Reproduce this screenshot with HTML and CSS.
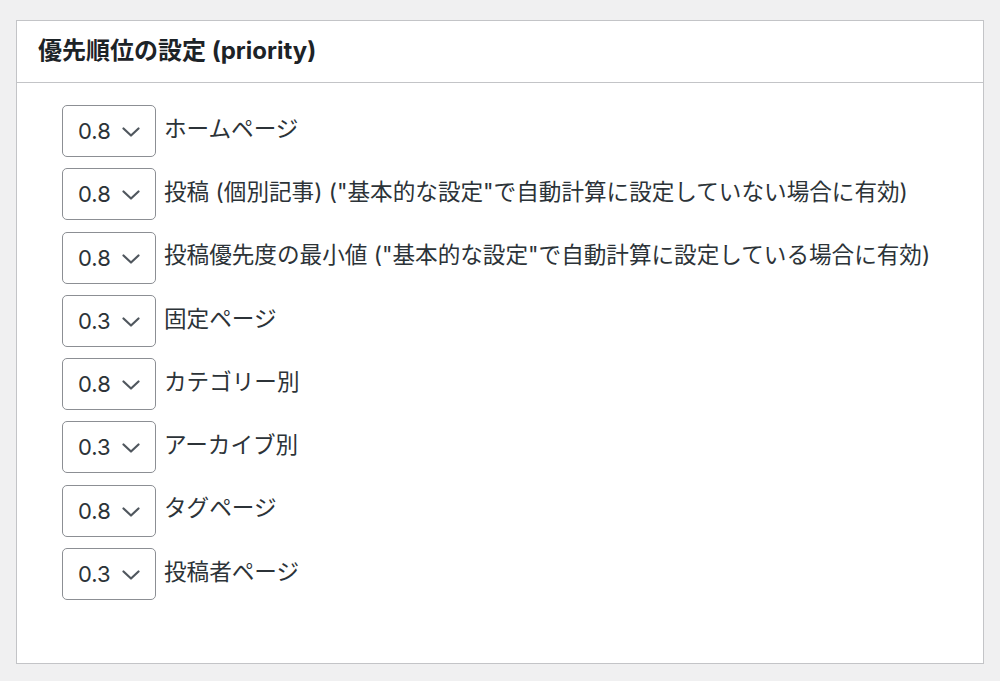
FILE: index.html
```html
<!DOCTYPE html>
<html lang="ja">
<head>
<meta charset="utf-8">
<title>優先順位の設定</title>
<link rel="stylesheet" href="styles.css">
</head>
<body>
<div class="postbox">
  <div class="postbox-header">
    <h2 class="hndle">優先順位の設定 (priority)</h2>
  </div>
  <div class="inside">
    <ul class="prio-list">
      <li class="prio-row"><span class="select-wrap"><select class="prio-select"><option>0.8</option></select><svg class="chev" viewBox="0 0 18 10"><path d="M1.5 1.5 L9 8.5 L16.5 1.5"/></svg></span><label class="prio-label">ホームページ</label></li>
      <li class="prio-row"><span class="select-wrap"><select class="prio-select"><option>0.8</option></select><svg class="chev" viewBox="0 0 18 10"><path d="M1.5 1.5 L9 8.5 L16.5 1.5"/></svg></span><label class="prio-label">投稿 (個別記事) ("基本的な設定"で自動計算に設定していない場合に有効)</label></li>
      <li class="prio-row"><span class="select-wrap"><select class="prio-select"><option>0.8</option></select><svg class="chev" viewBox="0 0 18 10"><path d="M1.5 1.5 L9 8.5 L16.5 1.5"/></svg></span><label class="prio-label">投稿優先度の最小値 ("基本的な設定"で自動計算に設定している場合に有効)</label></li>
      <li class="prio-row"><span class="select-wrap"><select class="prio-select"><option>0.3</option></select><svg class="chev" viewBox="0 0 18 10"><path d="M1.5 1.5 L9 8.5 L16.5 1.5"/></svg></span><label class="prio-label">固定ページ</label></li>
      <li class="prio-row"><span class="select-wrap"><select class="prio-select"><option>0.8</option></select><svg class="chev" viewBox="0 0 18 10"><path d="M1.5 1.5 L9 8.5 L16.5 1.5"/></svg></span><label class="prio-label">カテゴリー別</label></li>
      <li class="prio-row"><span class="select-wrap"><select class="prio-select"><option>0.3</option></select><svg class="chev" viewBox="0 0 18 10"><path d="M1.5 1.5 L9 8.5 L16.5 1.5"/></svg></span><label class="prio-label">アーカイブ別</label></li>
      <li class="prio-row"><span class="select-wrap"><select class="prio-select"><option>0.8</option></select><svg class="chev" viewBox="0 0 18 10"><path d="M1.5 1.5 L9 8.5 L16.5 1.5"/></svg></span><label class="prio-label">タグページ</label></li>
      <li class="prio-row"><span class="select-wrap"><select class="prio-select"><option>0.3</option></select><svg class="chev" viewBox="0 0 18 10"><path d="M1.5 1.5 L9 8.5 L16.5 1.5"/></svg></span><label class="prio-label">投稿者ページ</label></li>
    </ul>
  </div>
</div>
</body>
</html>
```

FILE: styles.css
```css
* { box-sizing: border-box; }
html, body { margin: 0; }
body {
  background: #f0f0f1;
  padding: 20px 16px 17px 16px;
  font-family: Inter, "Noto Sans CJK JP", sans-serif;
  color: #2c3338;
}
.postbox {
  background: #fff;
  border: 1px solid #c3c4c7;
  height: 644px;
  display: flex;
  flex-direction: column;
}
.postbox-header {
  height: 62px;
  border-bottom: 1px solid #c3c4c7;
  display: flex;
  align-items: center;
  padding-left: 21px;
}
.hndle {
  margin: 0;
  font-size: 24px;
  font-weight: 700;
  color: #1d2327;
  line-height: 1;
  padding-bottom: 1px;
}
.inside {
  padding: 22px 0 0 45px;
}
.prio-list {
  list-style: none;
  margin: 0;
  padding: 0;
  display: flex;
  flex-direction: column;
  gap: 11.3px;
}
.prio-row {
  display: flex;
  align-items: center;
  height: 52px;
}
.select-wrap {
  position: relative;
  display: block;
  width: 94px;
  height: 52px;
  flex: none;
}
.prio-select {
  appearance: none;
  -webkit-appearance: none;
  width: 100%;
  height: 100%;
  border: 1px solid #8c8f94;
  border-radius: 5px;
  background: #fff;
  padding: 0 0 0 15px;
  font-family: Inter, "Noto Sans CJK JP", sans-serif;
  font-size: 22px;
  color: #2c3338;
  margin: 0;
}
.chev {
  position: absolute;
  left: 60px;
  top: 22px;
  width: 18px;
  height: 10px;
  pointer-events: none;
}
.chev path {
  fill: none;
  stroke: #50575e;
  stroke-width: 2.2;
  stroke-linecap: round;
  stroke-linejoin: round;
}
.prio-label {
  margin-left: 8px;
  font-size: 22.6px;
  color: #2c3338;
  line-height: 1;
  padding-bottom: 4px;
}
```
